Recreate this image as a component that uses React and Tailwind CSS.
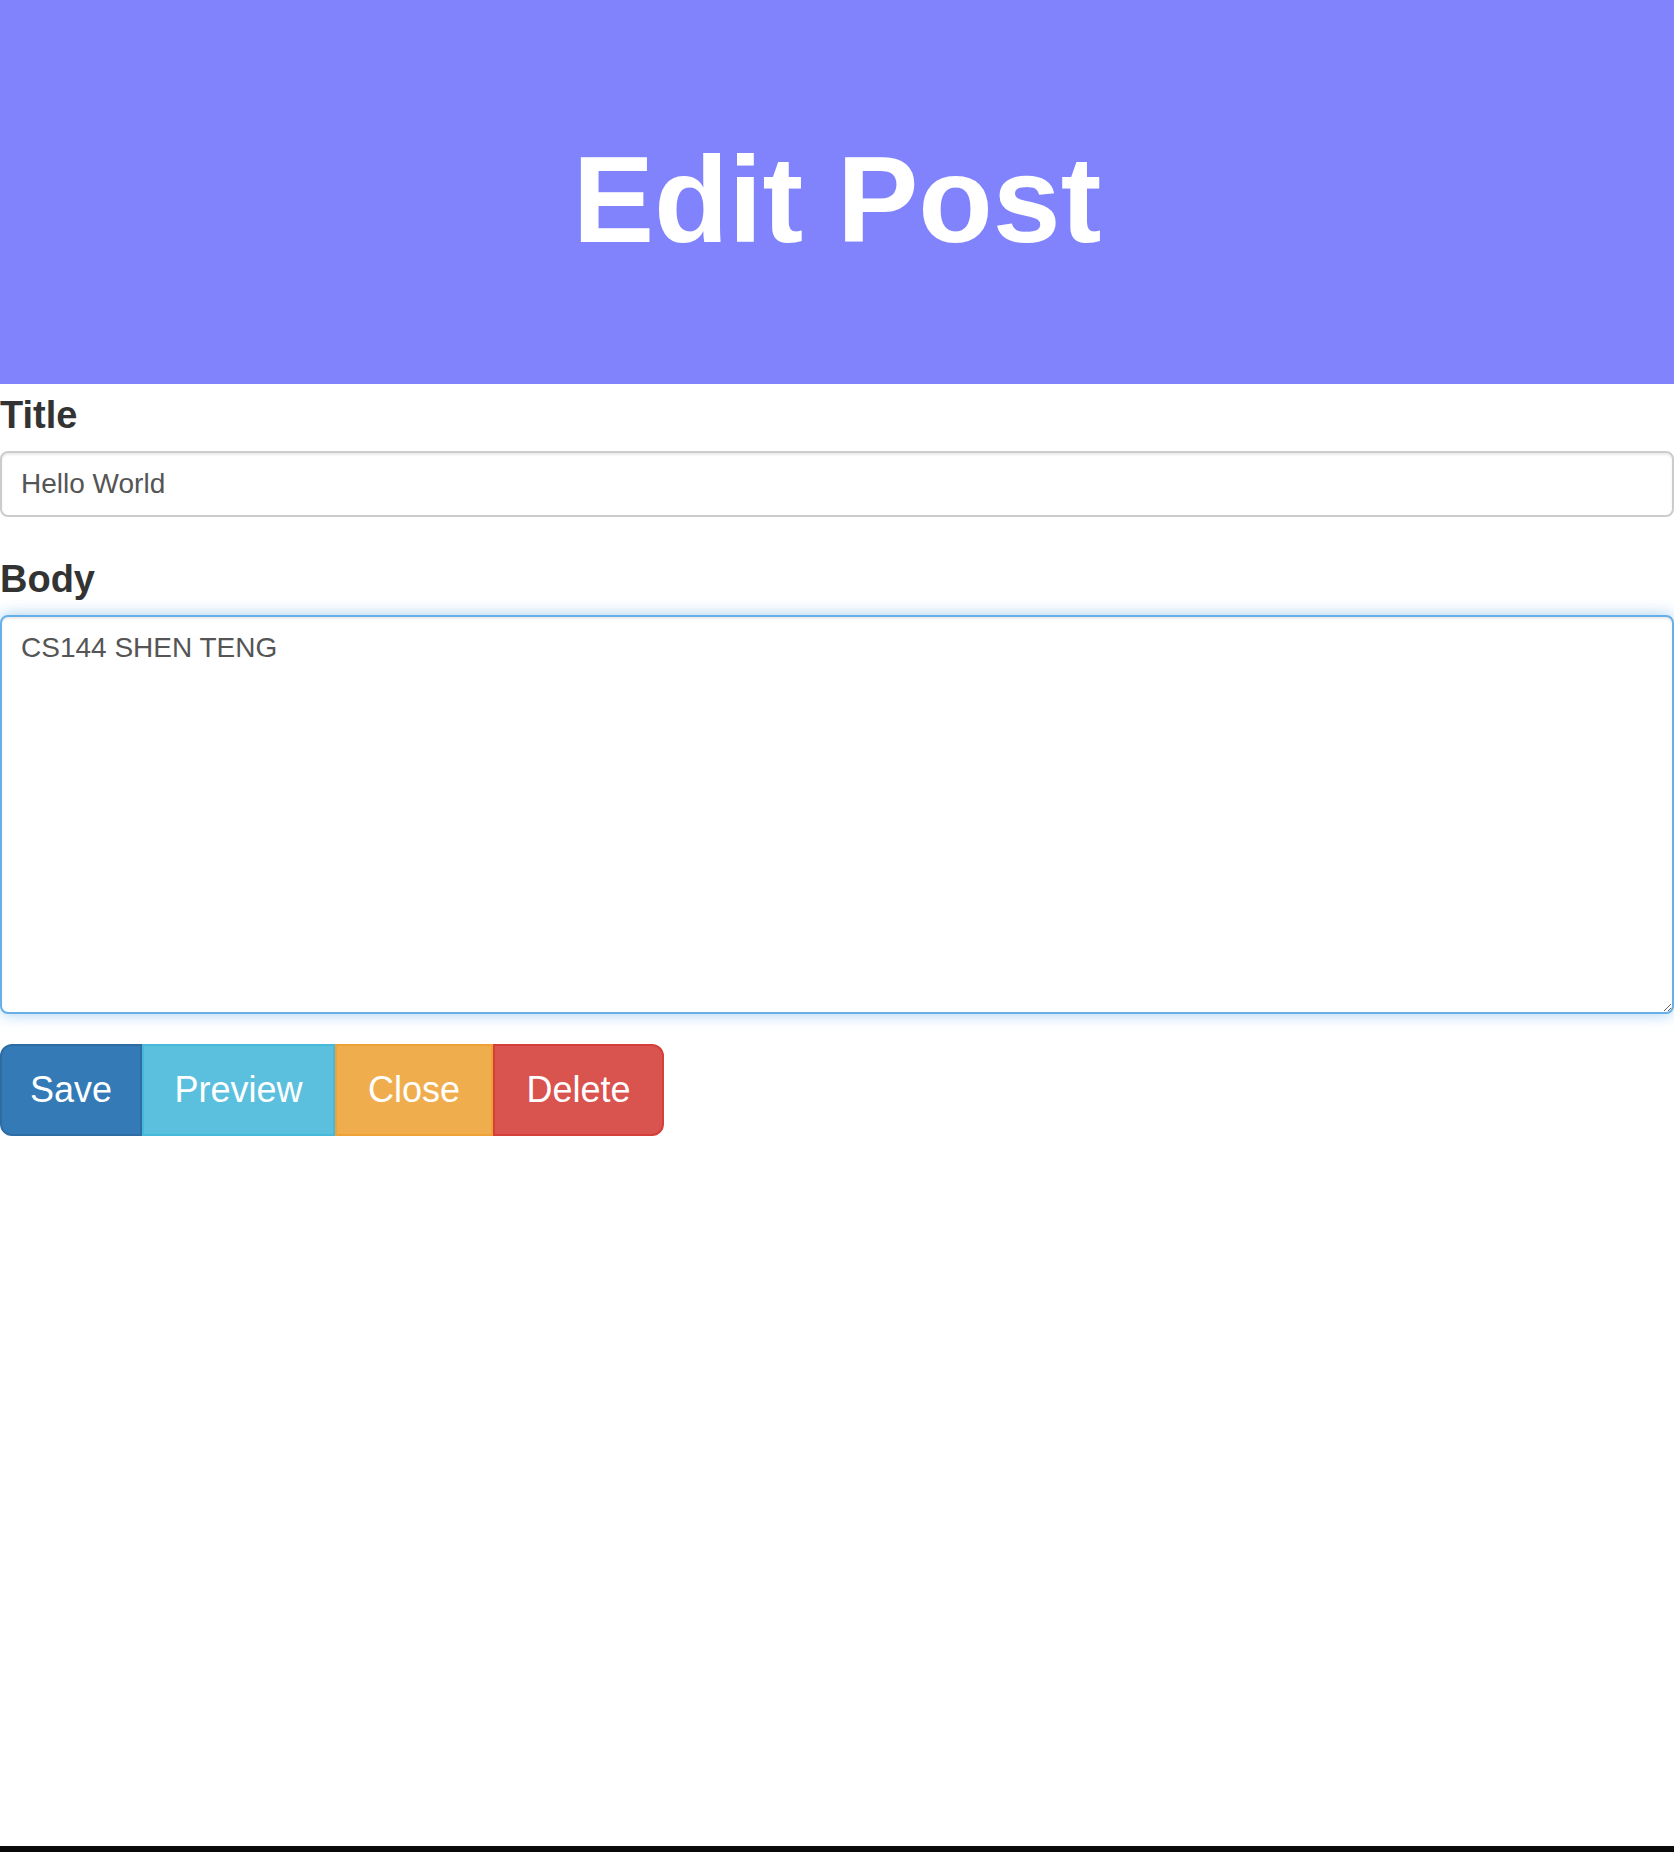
import React from 'react';

const buttons = [
  { label: 'Save', className: 'w-[142px] bg-[#337ab7] border-[#2e6da4] rounded-l-[12px]' },
  { label: 'Preview', className: 'w-[193px] bg-[#5bc0de] border-[#46b8da]' },
  { label: 'Close', className: 'w-[158px] bg-[#f0ad4e] border-[#eea236]' },
  { label: 'Delete', className: 'w-[171px] bg-[#d9534f] border-[#d43f3a] rounded-r-[12px]' },
];

const EditPost = () => {
  return (
    <div className="min-h-screen flex flex-col bg-white font-['Liberation_Sans',Arial,sans-serif]">
      {/* Header */}
      <header className="h-[384px] bg-[#8183fc] flex items-center justify-center pt-[16px]">
        <h1 className="text-[122px] leading-none font-bold text-white">Edit Post</h1>
      </header>

      {/* Form */}
      <main className="flex-1">
        <label className="block mt-[8px] mb-[13px] text-[38px] leading-[46px] font-bold text-[#333]">
          Title
        </label>
        <input
          type="text"
          defaultValue="Hello World"
          className="block w-full h-[66px] px-[19px] text-[28px] text-[#555] bg-white border-2 border-[#ccc] rounded-[8px] shadow-[inset_0_2px_2px_rgba(0,0,0,0.075)] outline-none"
        />

        <label className="block mt-[39px] mb-[13px] text-[38px] leading-[46px] font-bold text-[#333]">
          Body
        </label>
        <textarea
          defaultValue="CS144 SHEN TENG"
          className="block w-full h-[399px] px-[19px] py-[11px] text-[28px] leading-[40px] text-[#555] bg-white border-2 border-[#66afe9] rounded-[8px] shadow-[inset_0_2px_2px_rgba(0,0,0,0.075),0_0_16px_rgba(102,175,233,0.6)] outline-none"
        />

        {/* Action Buttons */}
        <div className="flex mt-[30px]">
          {buttons.map((b) => (
            <button
              key={b.label}
              type="button"
              className={`h-[92px] border-2 text-[36px] text-white flex items-center justify-center ${b.className}`}
            >
              {b.label}
            </button>
          ))}
        </div>
      </main>

      <div className="h-[6px] bg-[#0a0a0a]" />
    </div>
  );
};

export default EditPost;
